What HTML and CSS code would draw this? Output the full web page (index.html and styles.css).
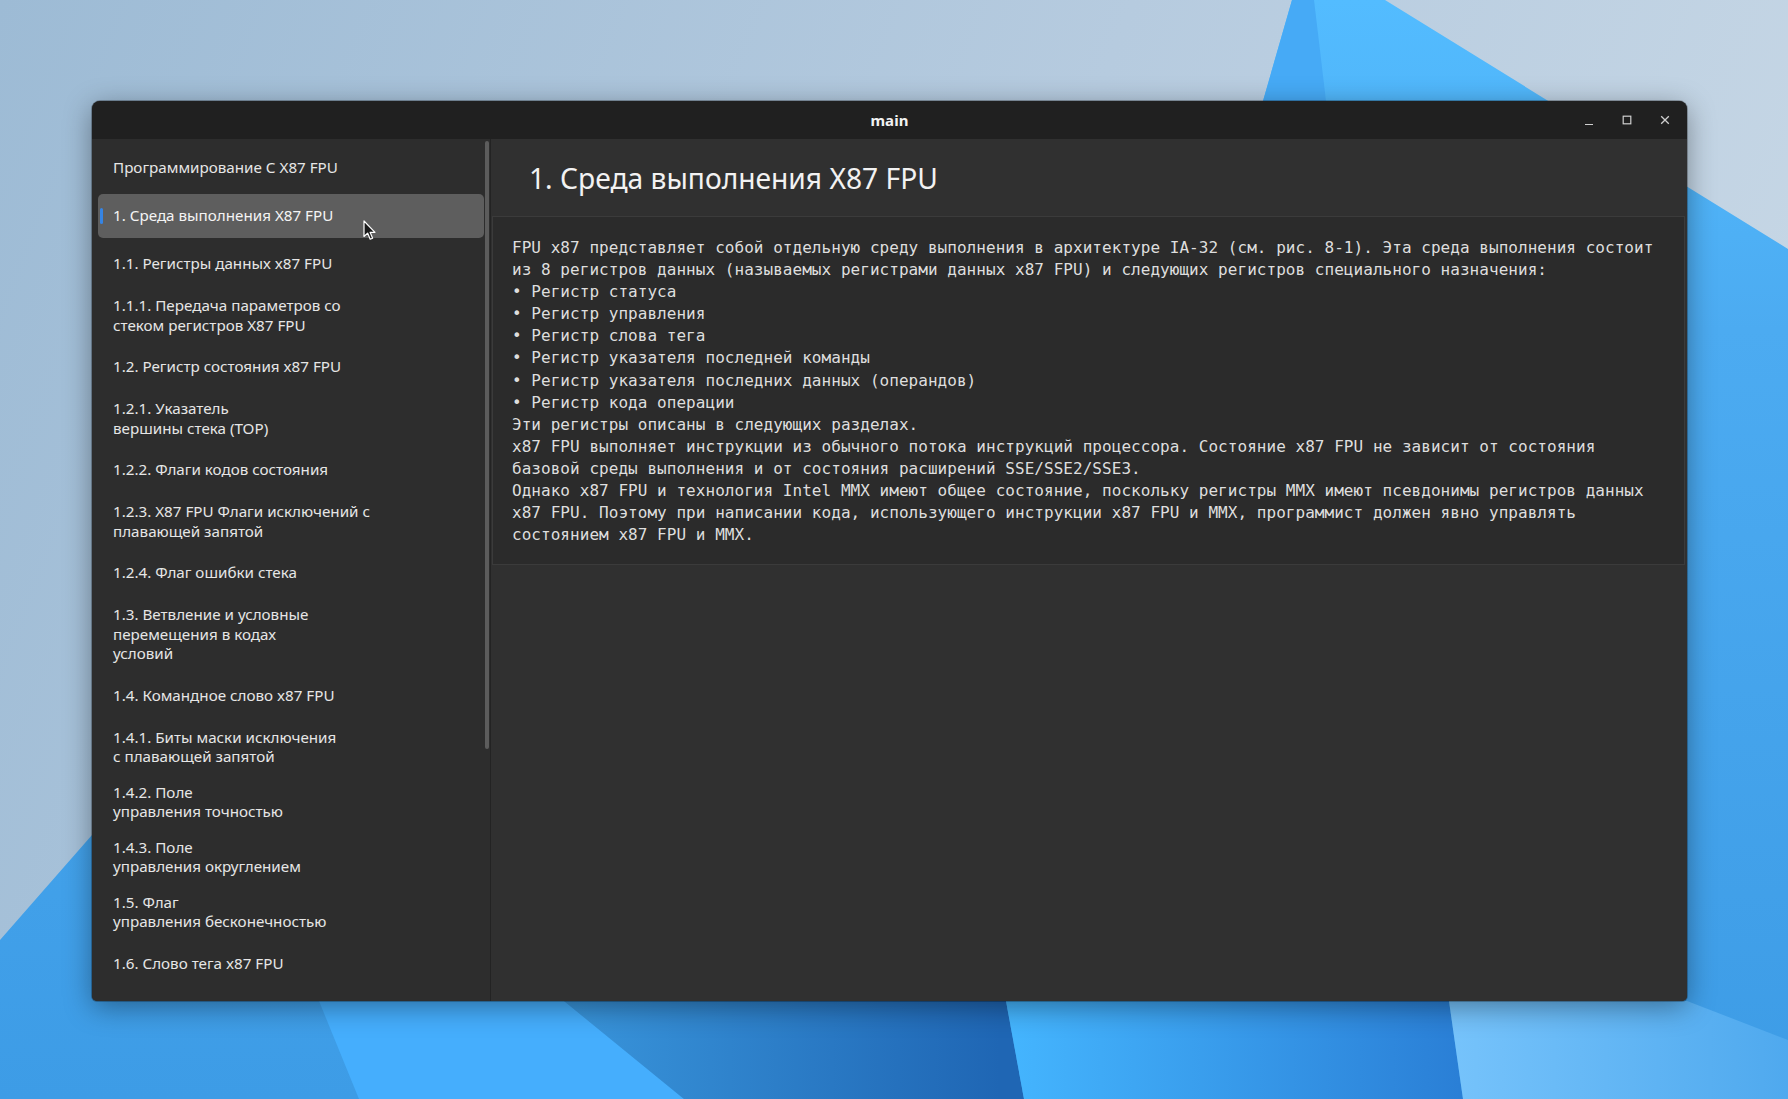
FILE: index.html
```html
<!DOCTYPE html>
<html lang="ru">
<head>
<meta charset="utf-8">
<title>main</title>
<link rel="stylesheet" href="styles.css">
</head>
<body>
<div class="desktop">
  <svg class="wallpaper" viewBox="0 0 1788 1099" preserveAspectRatio="none">
    <defs>
      <linearGradient id="sky" x1="0" y1="0" x2="1788" y2="700" gradientUnits="userSpaceOnUse">
        <stop offset="0" stop-color="#9dbbd5"/>
        <stop offset="0.55" stop-color="#b6cbdf"/>
        <stop offset="1" stop-color="#c8d8e6"/>
      </linearGradient>
      <linearGradient id="blue" x1="0" y1="0" x2="0" y2="1099" gradientUnits="userSpaceOnUse">
        <stop offset="0" stop-color="#53bcff"/>
        <stop offset="0.3" stop-color="#4cabf1"/>
        <stop offset="1" stop-color="#3d9ce6"/>
      </linearGradient>
      <linearGradient id="gC" x1="441" y1="0" x2="1000" y2="0" gradientUnits="userSpaceOnUse">
        <stop offset="0" stop-color="#40a2e6"/>
        <stop offset="1" stop-color="#1f66b4"/>
      </linearGradient>
      <linearGradient id="gD" x1="1000" y1="0" x2="1460" y2="0" gradientUnits="userSpaceOnUse">
        <stop offset="0" stop-color="#45b6ff"/>
        <stop offset="1" stop-color="#2a7fd6"/>
      </linearGradient>
      <linearGradient id="gE" x1="1450" y1="0" x2="1788" y2="0" gradientUnits="userSpaceOnUse">
        <stop offset="0" stop-color="#76c3fb"/>
        <stop offset="1" stop-color="#4fa9ee"/>
      </linearGradient>
    </defs>
    <rect x="0" y="0" width="1788" height="1099" fill="url(#sky)"/>
    <polygon points="1292,0 1385,0 1788,249 1788,1099 0,1099 0,940 92,835 1263,101" fill="url(#blue)"/>
    <polygon points="1292,0 1314,0 1326,101 1263,101" fill="#46aaf6"/>
    <polygon points="319,1001 564,1001 684,1099 359,1099" fill="#45aefd"/>
    <polygon points="564,1001 1006,1001 1024,1099 684,1099" fill="url(#gC)"/>
    <polygon points="1006,1001 1449,1001 1463,1099 1024,1099" fill="url(#gD)"/>
    <polygon points="1449,1001 1687,1001 1788,1040 1788,1099 1463,1099" fill="url(#gE)"/>
  </svg>

  <div class="window">
    <header class="titlebar">
      <span class="title">main</span>
      <div class="controls">
        <button class="ctl" aria-label="minimize">
          <svg width="10" height="10" viewBox="0 0 10 10"><path d="M1 9.5H9" stroke="#cfcfcf" stroke-width="1.2"/></svg>
        </button>
        <button class="ctl" aria-label="maximize">
          <svg width="10" height="10" viewBox="0 0 10 10"><rect x="1.2" y="1.2" width="7.6" height="7.6" fill="none" stroke="#cfcfcf" stroke-width="1.2"/></svg>
        </button>
        <button class="ctl" aria-label="close">
          <svg width="10" height="10" viewBox="0 0 10 10"><path d="M1.2 1.2L8.8 8.8M8.8 1.2L1.2 8.8" stroke="#cfcfcf" stroke-width="1.3"/></svg>
        </button>
      </div>
    </header>

    <div class="main">
      <nav class="sidebar">
        <ul class="toc">
          <li class="item">Программирование С X87 FPU</li>
          <li class="item active">1. Среда выполнения X87 FPU</li>
          <li class="item">1.1. Регистры данных x87 FPU</li>
          <li class="item">1.1.1. Передача параметров со<br>стеком регистров X87 FPU</li>
          <li class="item">1.2. Регистр состояния x87 FPU</li>
          <li class="item">1.2.1. Указатель<br>вершины стека (TOP)</li>
          <li class="item">1.2.2. Флаги кодов состояния</li>
          <li class="item">1.2.3. X87 FPU Флаги исключений с<br>плавающей запятой</li>
          <li class="item">1.2.4. Флаг ошибки стека</li>
          <li class="item">1.3. Ветвление и условные<br>перемещения в кодах<br>условий</li>
          <li class="item">1.4. Командное слово x87 FPU</li>
          <li class="item">1.4.1. Биты маски исключения<br>с плавающей запятой</li>
          <li class="item">1.4.2. Поле<br>управления точностью</li>
          <li class="item">1.4.3. Поле<br>управления округлением</li>
          <li class="item">1.5. Флаг<br>управления бесконечностью</li>
          <li class="item">1.6. Слово тега x87 FPU</li>
          <li class="item">1.7. x87 FPU Указатели<br>последней инструкции</li>
        </ul>
        <div class="scroll"><div class="thumb"></div></div>
      </nav>

      <section class="pane">
        <h1 class="pane-title">1. Среда выполнения X87 FPU</h1>
        <pre class="pane-body">FPU x87 представляет собой отдельную среду выполнения в архитектуре IA-32 (см. рис. 8-1). Эта среда выполнения состоит
из 8 регистров данных (называемых регистрами данных x87 FPU) и следующих регистров специального назначения:
• Регистр статуса
• Регистр управления
• Регистр слова тега
• Регистр указателя последней команды
• Регистр указателя последних данных (операндов)
• Регистр кода операции
Эти регистры описаны в следующих разделах.
x87 FPU выполняет инструкции из обычного потока инструкций процессора. Состояние x87 FPU не зависит от состояния
базовой среды выполнения и от состояния расширений SSE/SSE2/SSE3.
Однако x87 FPU и технология Intel MMX имеют общее состояние, поскольку регистры MMX имеют псевдонимы регистров данных
x87 FPU. Поэтому при написании кода, использующего инструкции x87 FPU и MMX, программист должен явно управлять
состоянием x87 FPU и MMX.</pre>
      </section>
    </div>
  </div>

  <svg class="cursor" width="14" height="21" viewBox="0 0 14 21">
    <path d="M1 1 L1 16.5 L4.6 13.1 L7.2 19.2 L9.6 18.2 L7.1 12.3 L12 12.3 Z" fill="#1a1a1a" stroke="#ffffff" stroke-width="1.2" stroke-linejoin="round"/>
  </svg>
</div>
</body>
</html>
```

FILE: styles.css
```css
* { box-sizing: border-box; }

html, body {
  margin: 0;
  padding: 0;
  width: 1788px;
  height: 1099px;
  overflow: hidden;
}

.desktop {
  position: relative;
  width: 1788px;
  height: 1099px;
  overflow: hidden;
  font-family: "Noto Sans", "Open Sans", sans-serif;
}

.wallpaper {
  position: absolute;
  left: 0;
  top: 0;
  width: 1788px;
  height: 1099px;
  display: block;
}

.window {
  position: absolute;
  left: 92px;
  top: 101px;
  width: 1595px;
  height: 900px;
  border-radius: 8px 8px 5px 5px;
  overflow: hidden;
  background: #303030;
  display: flex;
  flex-direction: column;
  box-shadow: 0 6px 28px rgba(0, 0, 0, 0.38), 0 0 0 1px rgba(0, 0, 0, 0.25);
}

.titlebar {
  height: 38px;
  flex: 0 0 38px;
  background: #202020;
  display: grid;
  grid-template-columns: 1fr auto 1fr;
  align-items: center;
}

.title {
  grid-column: 2;
  color: #f2f2f2;
  font-weight: 700;
  font-size: 15px;
  letter-spacing: 0.1px;
}

.controls {
  grid-column: 3;
  justify-self: end;
  display: flex;
  padding-right: 3px;
}

.ctl {
  width: 38px;
  height: 38px;
  border: 0;
  background: transparent;
  padding: 0;
  display: flex;
  align-items: center;
  justify-content: center;
}

.ctl svg { display: block; }

.main {
  flex: 1;
  display: flex;
  min-height: 0;
}

.sidebar {
  width: 399px;
  flex: 0 0 399px;
  background: #2d2d2d;
  border-right: 1px solid #232323;
  display: flex;
  overflow: hidden;
}

.toc {
  list-style: none;
  margin: 0;
  padding: 7px 1px 0 6px;
  flex: 1;
  display: flex;
  flex-direction: column;
  gap: 4px;
}

.item {
  position: relative;
  min-height: 44px;
  padding: 6px 10px 6px 15px;
  display: flex;
  flex-direction: column;
  justify-content: center;
  color: #e6e6e6;
  font-size: 15.2px;
  line-height: 19.5px;
  white-space: nowrap;
  border-radius: 5px;
  flex-shrink: 0;
}

.item.active {
  background: #5e5e5e;
  color: #f4f4f4;
}

.item.active::before {
  content: "";
  position: absolute;
  left: 2px;
  top: 14px;
  width: 3px;
  height: 16px;
  border-radius: 2px;
  background: #3584e4;
}

.scroll {
  width: 5px;
  flex: 0 0 5px;
  padding-top: 2px;
}

.thumb {
  width: 4px;
  height: 608px;
  border-radius: 2px;
  background: #5c5c5c;
}

.pane {
  flex: 1;
  min-width: 0;
  background: #303030;
  display: flex;
  flex-direction: column;
}

.pane-title {
  margin: 0;
  height: 77px;
  padding-left: 38px;
  display: flex;
  align-items: center;
  font-weight: 400;
  font-size: 28.2px;
  color: #f2f2f2;
  font-family: "Noto Sans", "Open Sans", sans-serif;
}

.pane-body {
  margin: 0 2px 0 1px;
  border: 1px solid #3b3b3b;
  background: #2b2b2b;
  padding: 20px 19px 18px 19px;
  font-family: "DejaVu Sans Mono", "Liberation Mono", monospace;
  font-size: 16px;
  letter-spacing: 0.04px;
  line-height: 22.1px;
  color: #dedede;
  white-space: pre;
  overflow: hidden;
}

.cursor {
  position: absolute;
  left: 363px;
  top: 220px;
  display: block;
}
```
